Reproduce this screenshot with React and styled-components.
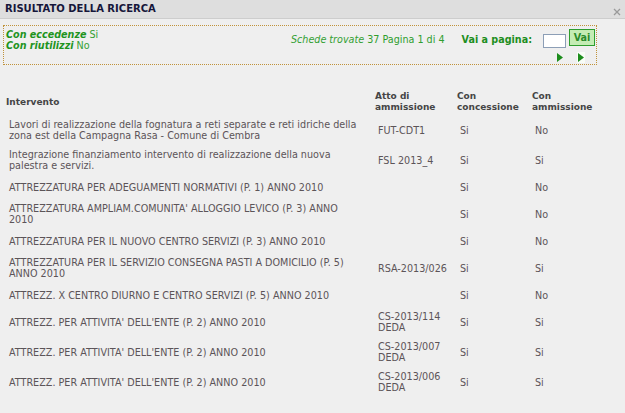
import React from 'react';
import styled, { createGlobalStyle } from 'styled-components';

const GlobalStyle = createGlobalStyle`
    body{
        margin: 0;
        background-color: #EFEFEF;
        font-family: "DejaVu Sans", Verdana, sans-serif;
    }
`

const TitleBar = styled.div`
    display: flex;
    justify-content: space-between;
    align-items: center;
    height: 18px;
    padding: 0 4px 0 5px;
    background-color: #DEDEDE;
    border-bottom: 1px solid #CDCDCD;
`

const Title = styled.div`
    font-size: 10px;
    font-weight: bold;
    color: #16163A;
    line-height: 16px;
`

const Close = styled.div`
    display: flex;
    margin-top: 6px;
    cursor: pointer;
`

const Content = styled.div`
    padding: 6px 3px 20px 3px;
`

const FilterBox = styled.div`
    width: 589px;
    display: flex;
    justify-content: space-between;
    padding: 3px 1px 1px 2px;
    border: 1px dotted #C0923A;
    font-size: 9.6px;
    line-height: 11px;
`

const FilterLine = styled.div`
    color: #34A034;
    b{
        font-style: italic;
        color: #1E941E;
    }
`

const Pager = styled.div`
    display: flex;
    flex-direction: column;
    align-items: flex-end;
`

const PagerRow = styled.div`
    display: flex;
    align-items: flex-start;
`

const Found = styled.div`
    margin-top: 5px;
    color: #2E9E2E;
    i{
        color: #33A033;
    }
`

const GoLabel = styled.div`
    margin: 5px 11px 0 17px;
    font-weight: bold;
    color: #1E8E1E;
`

const PageInput = styled.input`
    box-sizing: border-box;
    width: 23px;
    height: 14px;
    margin-top: 5px;
    padding: 0;
    border: 1px solid #8C9EB6;
    background-color: #FFFFFF;
`

const GoButton = styled.button`
    box-sizing: border-box;
    width: 26px;
    height: 17px;
    margin-left: 3px;
    padding: 0;
    border: 1px solid #2E9E2E;
    background-color: #C4ECB4;
    color: #2A8A2A;
    font-family: inherit;
    font-size: 9.6px;
    font-weight: bold;
    cursor: pointer;
`

const Arrows = styled.div`
    display: flex;
    gap: 13px;
    margin: 4px 10px 0 0;
`

const Table = styled.table`
    width: 597px;
    margin-top: 24px;
    table-layout: fixed;
    border-collapse: collapse;
    font-size: 9.65px;
    line-height: 11px;
    color: #5C5458;
`

const HeadCell = styled.th`
    width: ${props => props.w}px;
    padding: 2px 3px;
    text-align: left;
    vertical-align: middle;
    font-size: 9px;
    color: #454545;
`

const Cell = styled.td`
    height: 16px;
    padding: 4px ${props => props.$wrap ? 10 : 6}px 4px 6px;
    vertical-align: middle;
`

const Arrow = ({ shaded }) => (
    <svg width="8" height="11" viewBox="0 0 8 11">
        {shaded && <rect x="0" y="0" width="8" height="11" fill="#F8FCF6" />}
        <polygon points="1,1 7,5.5 1,10" fill="#1C8C1C" />
    </svg>
)

const rows = [
    ['Lavori di realizzazione della fognatura a reti separate e reti idriche della zona est della Campagna Rasa - Comune di Cembra', 'FUT-CDT1', 'Si', 'No'],
    ['Integrazione finanziamento intervento di realizzazione della nuova palestra e servizi.', 'FSL 2013_4', 'Si', 'Si'],
    ['ATTREZZATURA PER ADEGUAMENTI NORMATIVI (P. 1) ANNO 2010', '', 'Si', 'No'],
    ["ATTREZZATURA AMPLIAM.COMUNITA' ALLOGGIO LEVICO (P. 3) ANNO 2010", '', 'Si', 'No'],
    ['ATTREZZATURA PER IL NUOVO CENTRO SERVIZI (P. 3) ANNO 2010', '', 'Si', 'No'],
    ['ATTREZZATURA PER IL SERVIZIO CONSEGNA PASTI A DOMICILIO (P. 5) ANNO 2010', 'RSA-2013/026', 'Si', 'Si'],
    ['ATTREZZ. X CENTRO DIURNO E CENTRO SERVIZI (P. 5) ANNO 2010', '', 'Si', 'No'],
    ["ATTREZZ. PER ATTIVITA' DELL'ENTE (P. 2) ANNO 2010", 'CS-2013/114 DEDA', 'Si', 'Si'],
    ["ATTREZZ. PER ATTIVITA' DELL'ENTE (P. 2) ANNO 2010", 'CS-2013/007 DEDA', 'Si', 'Si'],
    ["ATTREZZ. PER ATTIVITA' DELL'ENTE (P. 2) ANNO 2010", 'CS-2013/006 DEDA', 'Si', 'Si'],
]

const App = () => {
    return (
        <>
            <GlobalStyle />
            <TitleBar>
                <Title>RISULTATO DELLA RICERCA</Title>
                <Close>
                    <svg width="8" height="8" viewBox="0 0 8 8">
                        <path d="M1 1 L7 7 M7 1 L1 7" stroke="#9A9A9A" strokeWidth="1.3" />
                    </svg>
                </Close>
            </TitleBar>
            <Content>
                <FilterBox>
                    <div>
                        <FilterLine><b>Con eccedenze</b> Si</FilterLine>
                        <FilterLine><b>Con riutilizzi</b> No</FilterLine>
                    </div>
                    <Pager>
                        <PagerRow>
                            <Found><i>Schede trovate</i> 37 Pagina 1 di 4</Found>
                            <GoLabel>Vai a pagina:</GoLabel>
                            <PageInput type="text" />
                            <GoButton>Vai</GoButton>
                        </PagerRow>
                        <Arrows>
                            <Arrow />
                            <Arrow shaded />
                        </Arrows>
                    </Pager>
                </FilterBox>
                <Table>
                    <thead>
                        <tr>
                            <HeadCell w={363}>Intervento</HeadCell>
                            <HeadCell w={76}>Atto di ammissione</HeadCell>
                            <HeadCell w={69}>Con concessione</HeadCell>
                            <HeadCell w={65}>Con ammissione</HeadCell>
                        </tr>
                    </thead>
                    <tbody>
                        {rows.map((r, i) => (
                            <tr key={i}>
                                {r.map((c, j) => <Cell key={j} $wrap={j === 0}>{c}</Cell>)}
                            </tr>
                        ))}
                    </tbody>
                </Table>
            </Content>
        </>
    )
}

export default App;
